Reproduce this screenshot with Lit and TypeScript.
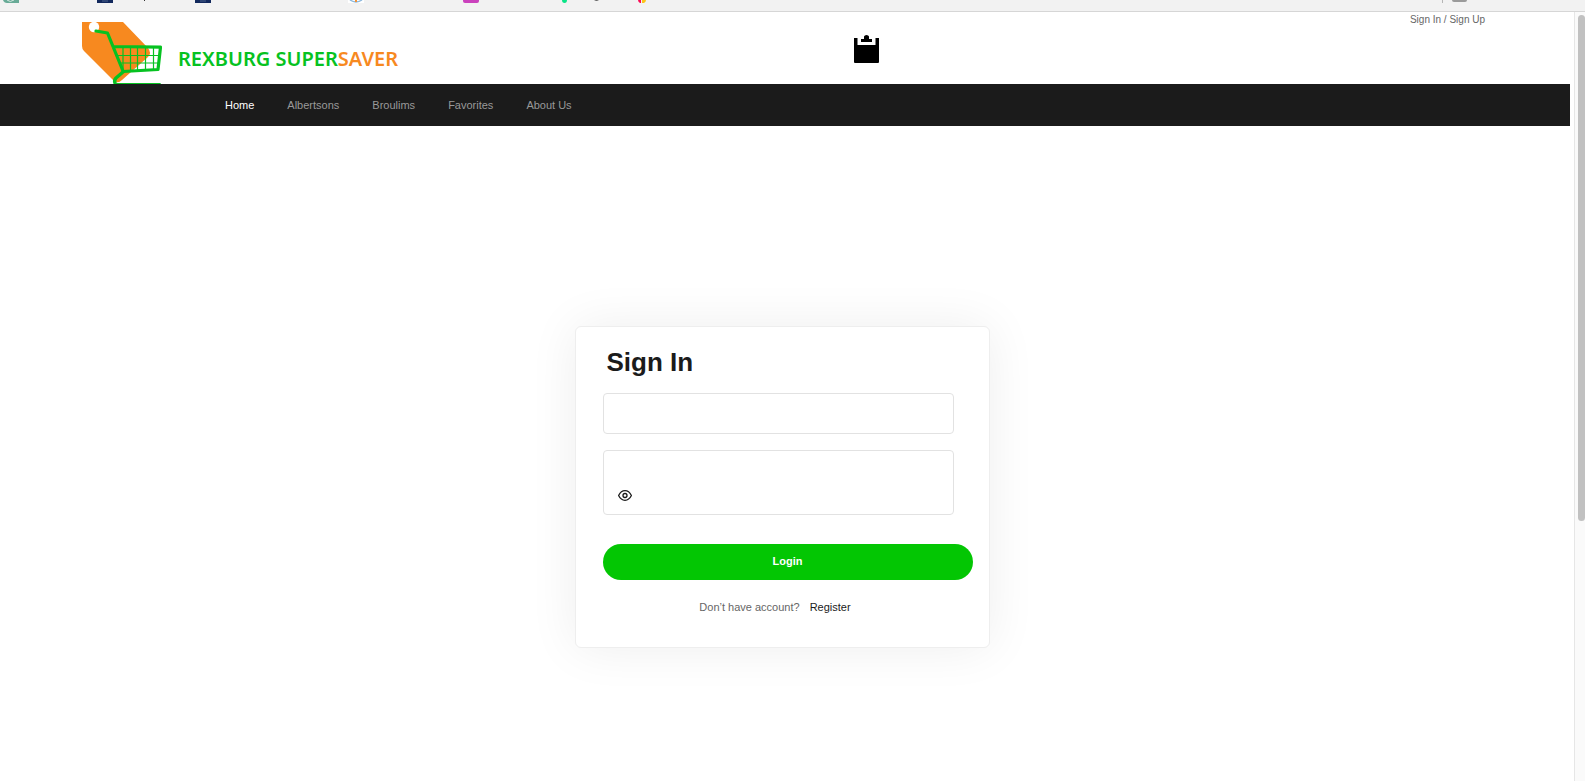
import { LitElement, html, css } from "lit";
import { customElement, state } from "lit/decorators.js";

@customElement("bookmark-strip")
class BookmarkStrip extends LitElement {
  static styles = css`
    :host {
      display: block;
      box-sizing: border-box;
      height: 12px;
      background: #f2f2f2;
      border-bottom: 1px solid #d6d6d6;
    }
    .row {
      display: flex;
      justify-content: space-between;
    }
    svg {
      display: block;
    }
  `;
  render() {
    return html`<div class="row" aria-hidden="true">
      <svg width="660" height="4" viewBox="0 0 660 4">
        <path d="M3 0h16v3H7q-3 0-4-3z" fill="#68ab97" />
        <path d="M7 0q3 3 7 0" fill="none" stroke="#d5e8e1" />
        <path d="M97 0h16v3H97zM195 0h16v3h-16z" fill="#12295d" />
        <path d="M102 1h6M200 1h6" stroke="#4d648f" />
        <path d="M144 0h1v1h-1z" fill="#333" />
        <path d="M348 0h16v3h-16z" fill="#fff" />
        <path d="M350 0q6 4 12 0" fill="none" stroke="#8db9dd" stroke-width="1.500" />
        <path d="M355 0h2v2h-2z" fill="#f0923a" />
        <path d="M463 0h16v1q0 2-2 2h-12q-2 0-2-2z" fill="#cb42bd" />
        <path d="M562 0h5q0 3-2.500 3T562 0z" fill="#0be487" />
        <path d="M594 0h5q-2.500 1.500-5 0z" fill="#333" />
        <path d="M638 0h3v3h-1q-2-1-2-3z" fill="#fb0a55" />
        <path d="M642 0h4q0 2-2 3h-2z" fill="#fcc419" />
      </svg>
      <svg width="143" height="4" viewBox="0 0 143 4">
        <path d="M0 0h1v3H0z" fill="#b5b5b5" />
        <path d="M10 0h15q0 2-2 2H12q-2 0-2-2z" fill="#9b9b9b" />
      </svg>
    </div>`;
  }
}

@customElement("site-header")
class SiteHeader extends LitElement {
  static styles = css`
    :host {
      display: block;
    }
    .top {
      display: grid;
      grid-template-columns: 55% auto 1fr;
      height: 72px;
      padding: 0 85px 0 82px;
      overflow: hidden;
    }
    .brand {
      display: flex;
      align-items: flex-start;
      gap: 16px;
      padding-top: 10px;
      text-decoration: none;
      color: #06c221;
      font: 600 20px/28px "Noto Sans", sans-serif;
      white-space: nowrap;
    }
    .brand span {
      padding-top: 23px;
    }
    .brand b {
      font-weight: 600;
      color: #f7891f;
    }
    svg {
      display: block;
      flex: none;
    }
    .list {
      align-self: start;
      padding: 23px 0 0;
      border: 0;
      background: none;
    }
    .account {
      justify-self: end;
      color: #666;
      font-size: 10px;
      line-height: 16px;
    }
    a {
      color: inherit;
      text-decoration: none;
    }
    nav {
      display: flex;
      gap: 33px;
      padding: 0 225px;
      background: #1b1b1b;
      color: #999;
      font-size: 11px;
      line-height: 42px;
    }
    .active {
      color: #fff;
    }
  `;
  private links = ["Home", "Albertsons", "Broulims", "Favorites", "About Us"];
  render() {
    return html`
      <div class="top">
        <a class="brand" href="#">
          <svg width="80" height="62" viewBox="0 0 80 62" fill="none">
            <path d="M0 0h41l25 26q4 5 0 9L40 58q-4 4-8 1L2 29q-2-2-2-5z" fill="#f7891f" />
            <circle cx="12" cy="5" r="5.200" fill="#fff" />
            <g stroke="#06c221" stroke-linecap="round" stroke-linejoin="round">
              <path d="M14 9l11.500 2L41 49M31 24.500l47.500.7L76 47.500l-35 2" stroke-width="3.200" />
              <path
                d="M34 33.500h43M38 41h38M41 26v22M48.500 26v22M55.500 26v22M63.500 26v21M71.500 26v21"
                stroke-width="1.200"
              />
              <path d="M41 50l-7 6q-2 2-1 5" stroke-width="3.500" />
              <path d="M33 62h45" stroke-width="1.800" />
            </g>
          </svg>
          <span>REXBURG SUPER<b>SAVER</b></span>
        </a>
        <button class="list" aria-label="Shopping list">
          <svg width="25" height="28" viewBox="0 0 25 28">
            <path d="M0 3h3.500v7h18V3H25v24q0 1-1 1H1q-1 0-1-1z" />
            <path d="M7 7V4h3V1.500Q10.500 0 12.500 0T15 1.500V4h3v3z" />
          </svg>
        </button>
        <div class="account"><a href="#">Sign In</a> / <a href="#">Sign Up</a></div>
      </div>
      <nav>
        ${this.links.map((l, i) => html`<a href="#" class=${i === 0 ? "active" : ""}>${l}</a>`)}
      </nav>
    `;
  }
}

@customElement("sign-in-card")
class SignInCard extends LitElement {
  @state() private visible = false;

  static styles = css`
    :host {
      display: block;
      box-sizing: border-box;
      width: 415px;
      padding: 18px 16px 32px 27px;
      border: 1px solid #eee;
      border-radius: 6px;
      background: #fff;
      box-shadow: 0 0 50px rgba(0, 0, 0, 0.07);
      color: #1b1b1b;
      font-size: 11px;
    }
    form {
      display: flex;
      flex-direction: column;
    }
    h1 {
      margin: 0 0 14px 4px;
      font-size: 26px;
      line-height: 34px;
    }
    .field {
      box-sizing: border-box;
      margin: 0 19px 16px 0;
      padding: 0 14px;
      border: 1px solid #e2e2e2;
      border-radius: 4px;
    }
    input {
      display: block;
      box-sizing: border-box;
      width: 100%;
      height: 39px;
      padding: 0;
      border: 0;
      outline: 0;
      background: none;
      font: inherit;
    }
    .password {
      margin-bottom: 29px;
      padding-bottom: 12px;
    }
    .eye {
      display: block;
      padding: 0;
      border: 0;
      background: none;
      color: inherit;
    }
    .eye svg {
      display: block;
    }
    .login {
      height: 36px;
      padding: 0 0 2px;
      border: 0;
      border-radius: 18px;
      background: #03c603;
      color: #fff;
      font: inherit;
      font-weight: 700;
    }
    p {
      display: flex;
      justify-content: center;
      gap: 10px;
      margin: 19px 25px 0 0;
      color: #666;
      line-height: 16px;
    }
    a {
      color: #1b1b1b;
      text-decoration: none;
    }
  `;
  render() {
    return html`<form @submit=${(e: Event) => e.preventDefault()}>
      <h1>Sign In</h1>
      <div class="field"><input type="email" aria-label="Email" /></div>
      <div class="field password">
        <input type=${this.visible ? "text" : "password"} aria-label="Password" />
        <button
          class="eye"
          type="button"
          aria-label="Show password"
          @click=${() => (this.visible = !this.visible)}
        >
          <svg width="14" height="12" viewBox="0 0 14 12" fill="none" stroke="currentColor">
            <path
              d="M.6 5.500Q3 .7 7 .7T13.400 5.500Q11 10.300 7 10.300T.6 5.500z"
              stroke-width="1.300"
              stroke-linejoin="round"
            />
            <circle cx="7" cy="5.500" r="2" stroke-width="1.300" />
          </svg>
        </button>
      </div>
      <button class="login" type="submit">Login</button>
      <p><span>Don’t have account?</span><a href="#">Register</a></p>
    </form>`;
  }
}

@customElement("app-root")
class AppRoot extends LitElement {
  static styles = css`
    :host {
      display: flex;
      flex-direction: column;
      height: 100vh;
      overflow: hidden;
      background: #fff;
      font-family: "Liberation Sans", Arial, sans-serif;
    }
    .view {
      display: flex;
      flex: 1;
      min-height: 0;
    }
    .page {
      flex: 1;
      margin-right: 4px;
    }
    main {
      display: flex;
      justify-content: center;
      padding: 200px 6px 0 0;
    }
    .scrollbar {
      box-sizing: border-box;
      width: 11px;
      padding: 3px 0 0 3px;
      border-left: 1px solid #e6e6e6;
      background: #fafafa;
    }
    .thumb {
      height: 66%;
      border-radius: 4px;
      background: #c1c1c1;
    }
  `;
  render() {
    return html`
      <bookmark-strip></bookmark-strip>
      <div class="view">
        <div class="page">
          <site-header></site-header>
          <main><sign-in-card></sign-in-card></main>
        </div>
        <div class="scrollbar"><div class="thumb"></div></div>
      </div>
    `;
  }
}
